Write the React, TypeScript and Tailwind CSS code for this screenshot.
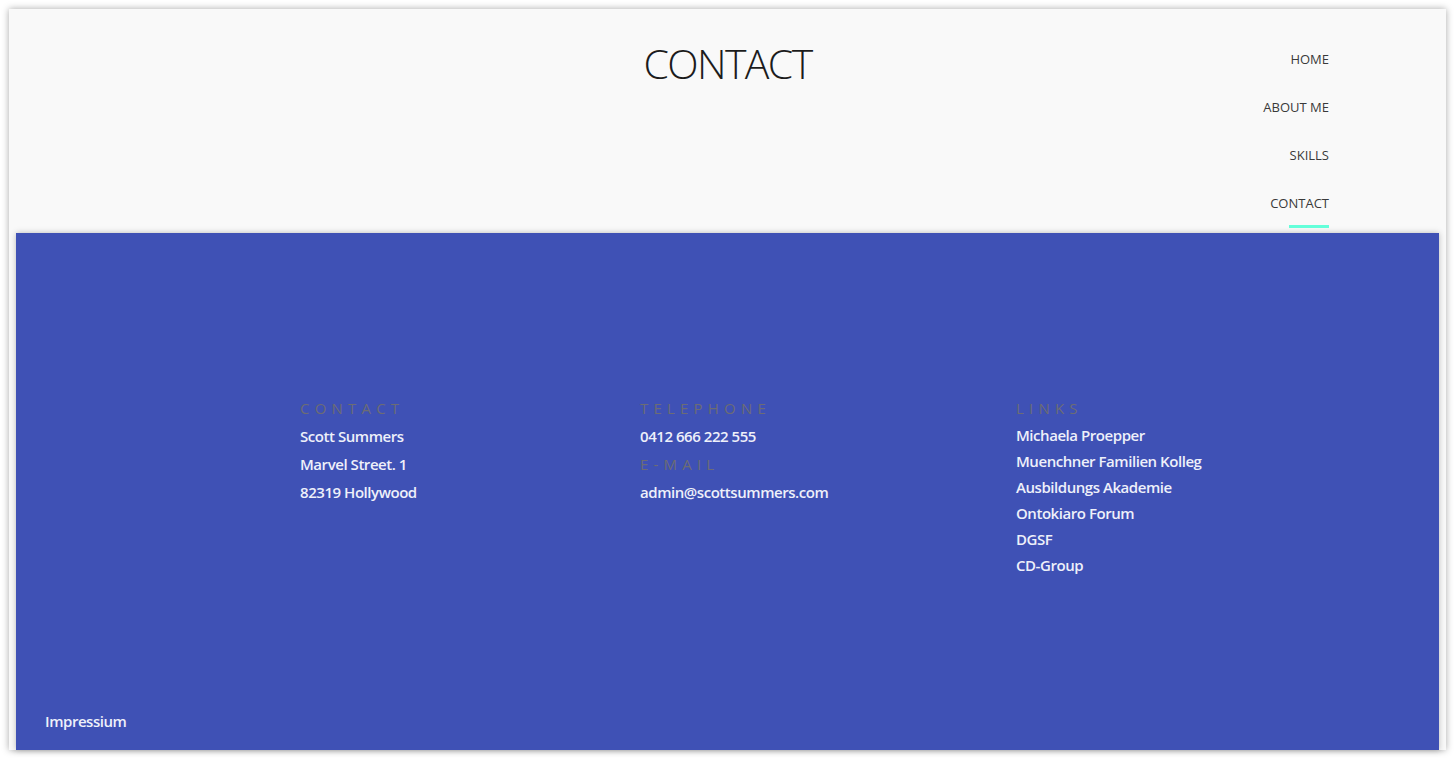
const NAV_ITEMS = ["HOME", "ABOUT ME", "SKILLS", "CONTACT"] as const

const LINKS = [
  "Michaela Proepper",
  "Muenchner Familien Kolleg",
  "Ausbildungs Akademie",
  "Ontokiaro Forum",
  "DGSF",
  "CD-Group",
]

const FONT = "font-['Open_Sans',_'Noto_Sans',_sans-serif]"
const TEXT = "text-[15px] font-semibold tracking-[-0.45px] text-[#eef0fa]"

const Heading = ({ children }: { children: string }) => (
  <h3 className="h-[28px] text-[15px] leading-[28px] font-normal tracking-[5.2px] text-[#6c6c74]">{children}</h3>
)

const Line = ({ children }: { children: string }) => (
  <p className={`h-[28px] leading-[28px] ${TEXT}`}>{children}</p>
)

export default function App() {
  return (
    <div className={`h-screen overflow-hidden bg-white pt-[9px] pl-[9px] pr-[8px] ${FONT}`}>
      <div className="h-[741px] flex flex-col bg-[#f9f9f9] shadow-[0_0_7px_rgba(0,0,0,0.35)]">
        {/* Header */}
        <header className="h-[224px] shrink-0 grid grid-cols-[1fr_auto_1fr]">
          <div />
          <h1 className="pt-[32px] text-[41px] leading-[44px] font-[350] tracking-[-1.6px] text-[#1c1c1c]">CONTACT</h1>
          <nav className="flex flex-col items-end pr-[117px] pt-[31px]">
            {NAV_ITEMS.map(item => (
              <a
                key={item}
                href="#"
                className="relative h-[48px] text-[13px] leading-[38px] text-[#3a3a3a]"
              >
                {item}
                {item === "CONTACT" && (
                  <span className="absolute right-0 bottom-[4px] h-[3px] w-[40px] bg-[#64ffda]" />
                )}
              </a>
            ))}
          </nav>
        </header>

        {/* Footer */}
        <footer className="mx-[7px] flex-1 flex flex-col bg-[#3f51b5] shadow-[0_0_6px_rgba(0,0,0,0.25)]">
          <div className="flex pl-[284px] pt-[161px]">
            <div className="w-[340px]">
              <Heading>CONTACT</Heading>
              <Line>Scott Summers</Line>
              <Line>Marvel Street. 1</Line>
              <Line>82319 Hollywood</Line>
            </div>
            <div className="w-[376px]">
              <Heading>TELEPHONE</Heading>
              <Line>0412 666 222 555</Line>
              <Heading>E-MAIL</Heading>
              <Line>admin@scottsummers.com</Line>
            </div>
            <div>
              <Heading>LINKS</Heading>
              {LINKS.map(link => (
                <a key={link} href="#" className={`block h-[26px] leading-[26px] ${TEXT}`}>
                  {link}
                </a>
              ))}
            </div>
          </div>
          <div className="mt-auto pl-[29px] pb-[16px]">
            <a href="#" className={`leading-[26px] ${TEXT}`}>Impressium</a>
          </div>
        </footer>
      </div>
    </div>
  )
}
